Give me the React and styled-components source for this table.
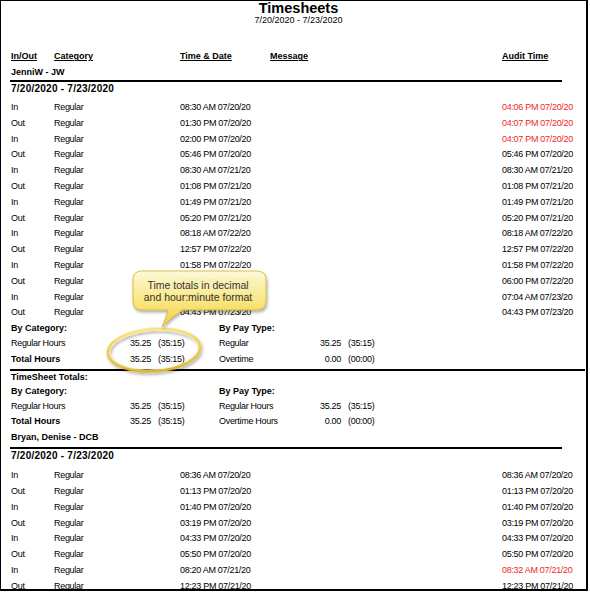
import React from 'react';
import styled, { createGlobalStyle } from 'styled-components';

const GlobalStyle = createGlobalStyle`
  html, body {
    margin: 0;
    padding: 0;
    background: #fff;
  }
  body {
    font-family: "Liberation Sans", Arial, sans-serif;
    color: #000;
  }
`;

const Page = styled.div`
  position: relative;
  width: 588px;
  height: 591px;
  box-sizing: border-box;
  border: 1px solid #000;
  border-right-width: 2px;
  border-bottom-width: 2px;
  padding-left: 10px;
  overflow: hidden;
  font-size: 9px;
`;

const ReportHeader = styled.header`
  text-align: center;
`;

const Title = styled.h1`
  margin: 0;
  font-size: 14.5px;
  line-height: 14px;
  font-weight: bold;
`;

const Subtitle = styled.div`
  font-size: 9px;
  line-height: 10px;
`;

const Grid = styled.div`
  display: grid;
  grid-template-columns: 43px 126px 90px 232px 72px;
  align-items: center;
  white-space: nowrap;
`;

const ColumnHeader = styled(Grid)`
  margin-top: 22.75px;
  height: 17px;
  font-weight: bold;

  span {
    text-decoration: underline;
    text-underline-offset: 1px;
  }
`;

const EmployeeName = styled.div`
  height: 15.4px;
  line-height: 15.4px;
  font-weight: bold;
`;

const Rule = styled.hr`
  margin: ${(p) => p.$top || 0}px 0 0 -1px;
  width: ${(p) => p.$width}px;
  height: 2px;
  border: 0;
  background: #000;
`;

const Period = styled.div`
  height: 13px;
  line-height: 13px;
  margin-bottom: ${(p) => p.$gap}px;
  font-size: 10px;
  font-weight: bold;
  letter-spacing: 0.25px;
`;

const DataRow = styled(Grid)`
  height: ${(p) => p.$pitch}px;
  line-height: ${(p) => p.$pitch}px;
  letter-spacing: -0.3px;
`;

const AuditTime = styled.span`
  color: ${(p) => (p.$late ? '#f0282a' : '#000')};
`;

const SummaryRow = styled.div`
  display: grid;
  grid-template-columns: 100px 40px 68px 82px 40px auto;
  height: 15.4px;
  line-height: 15.4px;
  white-space: nowrap;
`;

const SectionLabel = styled.div`
  height: 13px;
  line-height: 13px;
  font-weight: bold;
`;

const Label = styled.span`
  font-weight: ${(p) => (p.$bold ? 'bold' : 'normal')};
  letter-spacing: ${(p) => (p.$bold ? '0' : '-0.3px')};
`;

const Decimal = styled.span`
  text-align: right;
  letter-spacing: -0.3px;
`;

const Clock = styled.span`
  padding-left: 7px;
  letter-spacing: -0.3px;
`;

const CalloutSvg = styled.svg`
  position: absolute;
  left: 99px;
  top: 261px;
  width: 175px;
  height: 116px;
  overflow: visible;
`;

const jenniRows = [
  ['In', '08:30 AM 07/20/20', '04:06 PM 07/20/20', true],
  ['Out', '01:30 PM 07/20/20', '04:07 PM 07/20/20', true],
  ['In', '02:00 PM 07/20/20', '04:07 PM 07/20/20', true],
  ['Out', '05:46 PM 07/20/20', '05:46 PM 07/20/20'],
  ['In', '08:30 AM 07/21/20', '08:30 AM 07/21/20'],
  ['Out', '01:08 PM 07/21/20', '01:08 PM 07/21/20'],
  ['In', '01:49 PM 07/21/20', '01:49 PM 07/21/20'],
  ['Out', '05:20 PM 07/21/20', '05:20 PM 07/21/20'],
  ['In', '08:18 AM 07/22/20', '08:18 AM 07/22/20'],
  ['Out', '12:57 PM 07/22/20', '12:57 PM 07/22/20'],
  ['In', '01:58 PM 07/22/20', '01:58 PM 07/22/20'],
  ['Out', '06:00 PM 07/22/20', '06:00 PM 07/22/20'],
  ['In', '07:04 AM 07/23/20', '07:04 AM 07/23/20'],
  ['Out', '04:43 PM 07/23/20', '04:43 PM 07/23/20'],
];

const bryanRows = [
  ['In', '08:36 AM 07/20/20', '08:36 AM 07/20/20'],
  ['Out', '01:13 PM 07/20/20', '01:13 PM 07/20/20'],
  ['In', '01:40 PM 07/20/20', '01:40 PM 07/20/20'],
  ['Out', '03:19 PM 07/20/20', '03:19 PM 07/20/20'],
  ['In', '04:33 PM 07/20/20', '04:33 PM 07/20/20'],
  ['Out', '05:50 PM 07/20/20', '05:50 PM 07/20/20'],
  ['In', '08:20 AM 07/21/20', '08:32 AM 07/21/20', true],
  ['Out', '12:23 PM 07/21/20', '12:23 PM 07/21/20'],
];

const Punches = ({ rows, pitch }) =>
  rows.map(([dir, time, audit, late], i) => (
    <DataRow key={i} $pitch={pitch}>
      <span>{dir}</span>
      <span>Regular</span>
      <span>{time}</span>
      <span />
      <AuditTime $late={late}>{audit}</AuditTime>
    </DataRow>
  ));

const Totals = ({ regularLabel, overtimeLabel }) => (
  <>
    <SummaryRow>
      <Label $bold>By Category:</Label>
      <span />
      <span />
      <Label $bold>By Pay Type:</Label>
    </SummaryRow>
    <SummaryRow>
      <Label>Regular Hours</Label>
      <Decimal>35.25</Decimal>
      <Clock>(35:15)</Clock>
      <Label>{regularLabel}</Label>
      <Decimal>35.25</Decimal>
      <Clock>(35:15)</Clock>
    </SummaryRow>
    <SummaryRow>
      <Label $bold>Total Hours</Label>
      <Decimal>35.25</Decimal>
      <Clock>(35:15)</Clock>
      <Label>{overtimeLabel}</Label>
      <Decimal>0.00</Decimal>
      <Clock>(00:00)</Clock>
    </SummaryRow>
  </>
);

const Callout = () => (
  <CalloutSvg viewBox="100 262 175 116">
    <defs>
      <linearGradient id="bubbleFill" x1="0" y1="0" x2="0" y2="1">
        <stop offset="0" stopColor="#fffbd8" />
        <stop offset="0.55" stopColor="#fbe77c" />
        <stop offset="1" stopColor="#f2cd3c" />
      </linearGradient>
      <linearGradient id="ringStroke" x1="0" y1="0" x2="0" y2="1">
        <stop offset="0" stopColor="#f9e27a" />
        <stop offset="1" stopColor="#dcb42c" />
      </linearGradient>
      <filter id="softShadow" x="-20%" y="-20%" width="140%" height="160%">
        <feGaussianBlur in="SourceAlpha" stdDeviation="1.6" />
        <feOffset dx="1" dy="2" result="blur" />
        <feComponentTransfer>
          <feFuncA type="linear" slope="0.35" />
        </feComponentTransfer>
        <feMerge>
          <feMergeNode />
          <feMergeNode in="SourceGraphic" />
        </feMerge>
      </filter>
    </defs>
    <g transform="rotate(-4 154 350)" filter="url(#softShadow)">
      <ellipse cx="154" cy="350" rx="46" ry="21" fill="none" stroke="url(#ringStroke)" strokeWidth="3" />
      <ellipse cx="154" cy="350" rx="44.6" ry="19.6" fill="none" stroke="#fff6c2" strokeWidth="0.8" opacity="0.8" />
    </g>
    <path
      d="M142 271 H257 Q266 271 266 280 V301 Q266 310 257 310 H183 Q172 316 162 327 Q166 318 168 310 H142 Q133 310 133 301 V280 Q133 271 142 271 Z"
      fill="url(#bubbleFill)"
      fillOpacity="0.94"
      stroke="#d6b02a"
      strokeWidth="0.8"
      filter="url(#softShadow)"
    />
    <text
      x="198"
      textAnchor="middle"
      fontFamily="Liberation Sans, Arial, sans-serif"
      fontSize="10.5"
      fill="#333"
    >
      <tspan x="198" y="289">Time totals in decimal</tspan>
      <tspan x="198" y="301">and hour:minute format</tspan>
    </text>
  </CalloutSvg>
);

export default function App() {
  return (
    <>
      <GlobalStyle />
      <Page>
        <ReportHeader>
          <Title>Timesheets</Title>
          <Subtitle>7/20/2020 - 7/23/2020</Subtitle>
        </ReportHeader>

        <ColumnHeader>
          <span>In/Out</span>
          <span>Category</span>
          <span>Time &amp; Date</span>
          <span>Message</span>
          <span>Audit Time</span>
        </ColumnHeader>

        <EmployeeName>JenniW - JW</EmployeeName>
        <Rule $width={552} />
        <Period $gap={4.8}>7/20/2020 - 7/23/2020</Period>
        <Punches rows={jenniRows} pitch={15.8} />
        <Totals regularLabel="Regular" overtimeLabel="Overtime" />

        <Rule $width={575} $top={1.3} />
        <SectionLabel>TimeSheet Totals:</SectionLabel>
        <Totals regularLabel="Regular Hours" overtimeLabel="Overtime Hours" />

        <EmployeeName>Bryan, Denise - DCB</EmployeeName>
        <Rule $width={552} $top={1.4} />
        <Period $gap={6.4}>7/20/2020 - 7/23/2020</Period>
        <Punches rows={bryanRows} pitch={15.9} />

        <Callout />
      </Page>
    </>
  );
}
